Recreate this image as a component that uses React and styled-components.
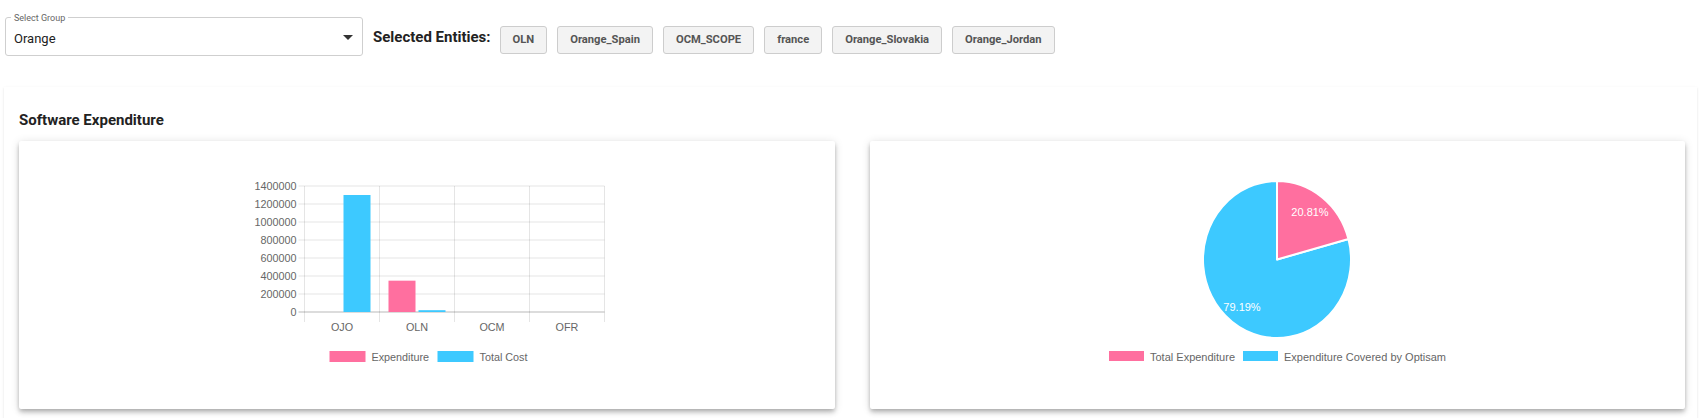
import React from 'react';
import styled, { createGlobalStyle } from 'styled-components';

const GlobalStyle = createGlobalStyle`
  html, body { margin: 0; padding: 0; background: #fff; }
  body { font-family: Roboto, "Noto Sans", Arial, sans-serif; color: #222; }
`;

const PINK = '#ff6f9f';
const BLUE = '#3dc9ff';
const CHART_FONT = '"Liberation Sans", Arial, Helvetica, sans-serif';
const AXIS = '#666';

const Page = styled.div`
  padding: 0 2px 0 4px;
`;

const Header = styled.div`
  display: flex;
  align-items: center;
  padding: 17px 0 0 1px;
  height: 39px;
`;

const SelectBox = styled.div`
  position: relative;
  box-sizing: border-box;
  width: 358px;
  height: 39px;
  border: 1px solid #cfcfcf;
  border-radius: 3px;
  display: flex;
  align-items: center;
  justify-content: space-between;
  padding: 4px 2px 0 8px;
`;

const SelectLabel = styled.span`
  position: absolute;
  top: -6px;
  left: 5px;
  padding: 0 3px;
  background: #fff;
  font-size: 9px;
  line-height: 12px;
  color: #666;
`;

const SelectValue = styled.span`
  font-size: 13px;
  color: #222;
`;

const ArrowIcon = styled.svg`
  margin-top: -4px;
`;

const EntityGroup = styled.div`
  display: flex;
  align-items: center;
  margin: 6px 0 0 10px;
`;

const EntitiesLabel = styled.span`
  font-size: 15px;
  font-weight: 700;
  color: #222;
  margin: 0 9px 6px 0;
`;

const ChipRow = styled.div`
  display: flex;
  gap: 10px;
`;

const Chip = styled.button`
  box-sizing: border-box;
  height: 28px;
  padding: 0 12px;
  border: 1px solid #cdcdcd;
  border-radius: 3px;
  background: #f3f3f3;
  font-family: Roboto, Arial, sans-serif;
  font-size: 11.2px;
  font-weight: 700;
  color: #555;
  cursor: pointer;
`;

const OuterCard = styled.section`
  margin-top: 31px;
  background: #fff;
  box-shadow: 0 2px 1px -1px rgba(0,0,0,0.12), 0 1px 1px 0 rgba(0,0,0,0.08), 0 1px 3px 0 rgba(0,0,0,0.08);
  padding: 24px 12px 16px 15px;
`;

const Title = styled.h2`
  margin: 0 0 12px;
  font-size: 15px;
  line-height: 18px;
  font-weight: 700;
  color: #222;
`;

const Grid = styled.div`
  display: grid;
  grid-template-columns: 1fr 1fr;
  gap: 35px;
`;

const ChartCard = styled.div`
  height: 268px;
  background: #fff;
  border-radius: 2px;
  box-shadow: 0 2px 4px -1px rgba(0,0,0,0.2), 0 4px 5px 0 rgba(0,0,0,0.14), 0 1px 10px 0 rgba(0,0,0,0.12);
  display: flex;
  justify-content: center;
  padding-top: 24px;
  box-sizing: border-box;
`;

const ChartSvg = styled.svg`
  display: block;
  overflow: visible;
  font-family: ${CHART_FONT};
  font-size: ${(p) => p.$fontSize || 10.8}px;
`;

const entities = ['OLN', 'Orange_Spain', 'OCM_SCOPE', 'france', 'Orange_Slovakia', 'Orange_Jordan'];

const plot = { left: 67.5, top: 21, bottom: 147 };
const CAT_W = 75;
const MAX_V = 1400000;
const yFor = (v) => plot.bottom - (v / MAX_V) * (plot.bottom - plot.top);
const ticks = [0, 200000, 400000, 600000, 800000, 1000000, 1200000, 1400000];
const cats = [
  { label: 'OJO', exp: 0, total: 1300000 },
  { label: 'OLN', exp: 348000, total: 20000 },
  { label: 'OCM', exp: 0, total: 0 },
  { label: 'OFR', exp: 0, total: 0 },
];

function BarChart() {
  const right = plot.left + CAT_W * cats.length;
  return (
    <ChartSvg width="380" height="210" viewBox="0 0 380 210">
      {ticks.map((t) => (
        <g key={t}>
          <line x1={plot.left - 6} x2={right} y1={yFor(t)} y2={yFor(t)}
            stroke={t === 0 ? 'rgba(0,0,0,0.28)' : 'rgba(0,0,0,0.1)'} strokeWidth="1" />
          <text x={plot.left - 8} y={yFor(t)} textAnchor="end" dominantBaseline="central" fill={AXIS}>{t}</text>
        </g>
      ))}
      {[0, 1, 2, 3, 4].map((i) => (
        <line key={i} x1={plot.left + i * CAT_W} x2={plot.left + i * CAT_W} y1={plot.top} y2={plot.bottom + 10}
          stroke="rgba(0,0,0,0.1)" strokeWidth="1" />
      ))}
      {cats.map((c, i) => {
        const start = plot.left + i * CAT_W + 7.5;
        return (
          <g key={c.label}>
            {c.exp > 0 && <rect x={start + 1.5} y={yFor(c.exp)} width="27" height={plot.bottom - yFor(c.exp)} fill={PINK} />}
            {c.total > 0 && <rect x={start + 31.5} y={yFor(c.total)} width="27" height={plot.bottom - yFor(c.total)} fill={BLUE} />}
            <text x={plot.left + i * CAT_W + 37.5} y={162} textAnchor="middle" dominantBaseline="central" fill={AXIS}>{c.label}</text>
          </g>
        );
      })}
      <rect x="92.5" y="186" width="36" height="11" fill={PINK} />
      <text x="134.5" y="191.5" dominantBaseline="central" fill={AXIS}>Expenditure</text>
      <rect x="200.5" y="186" width="36" height="11" fill={BLUE} />
      <text x="242.5" y="191.5" dominantBaseline="central" fill={AXIS}>Total Cost</text>
    </ChartSvg>
  );
}

function PieChart() {
  const cx = 190, cy = 94.5, rx = 74, ry = 78.5;
  const frac = 0.2081;
  const a = frac * Math.PI * 2;
  const ex = cx + rx * Math.sin(a);
  const ey = cy - ry * Math.cos(a);
  return (
    <ChartSvg width="380" height="210" viewBox="0 0 380 210" $fontSize={11}>
      <path d={`M${cx},${cy} L${ex},${ey} A${rx},${ry} 0 1 1 ${cx},${cy - ry} Z`} fill={BLUE} stroke="#fff" strokeWidth="2" strokeLinejoin="round" />
      <path d={`M${cx},${cy} L${cx},${cy - ry} A${rx},${ry} 0 0 1 ${ex},${ey} Z`} fill={PINK} stroke="#fff" strokeWidth="2" strokeLinejoin="round" />
      <text x="223" y="47" textAnchor="middle" dominantBaseline="central" fill="#fff">20.81%</text>
      <text x="155" y="142" textAnchor="middle" dominantBaseline="central" fill="#fff">79.19%</text>
      <rect x="22" y="186" width="35" height="10" fill={PINK} />
      <text x="63" y="191.5" dominantBaseline="central" fill={AXIS}>Total Expenditure</text>
      <rect x="156" y="186" width="35" height="10" fill={BLUE} />
      <text x="197" y="191.5" dominantBaseline="central" fill={AXIS}>Expenditure Covered by Optisam</text>
    </ChartSvg>
  );
}

export default function App() {
  return (
    <Page>
      <GlobalStyle />
      <Header>
        <SelectBox>
          <SelectLabel>Select Group</SelectLabel>
          <SelectValue>Orange</SelectValue>
          <ArrowIcon width="24" height="24" viewBox="0 0 24 24">
            <path d="M7 10l5 5 5-5z" fill="#333" />
          </ArrowIcon>
        </SelectBox>
        <EntityGroup>
          <EntitiesLabel>Selected Entities:</EntitiesLabel>
          <ChipRow>
            {entities.map((e) => <Chip key={e}>{e}</Chip>)}
          </ChipRow>
        </EntityGroup>
      </Header>
      <OuterCard>
        <Title>Software Expenditure</Title>
        <Grid>
          <ChartCard><BarChart /></ChartCard>
          <ChartCard><PieChart /></ChartCard>
        </Grid>
      </OuterCard>
    </Page>
  );
}
